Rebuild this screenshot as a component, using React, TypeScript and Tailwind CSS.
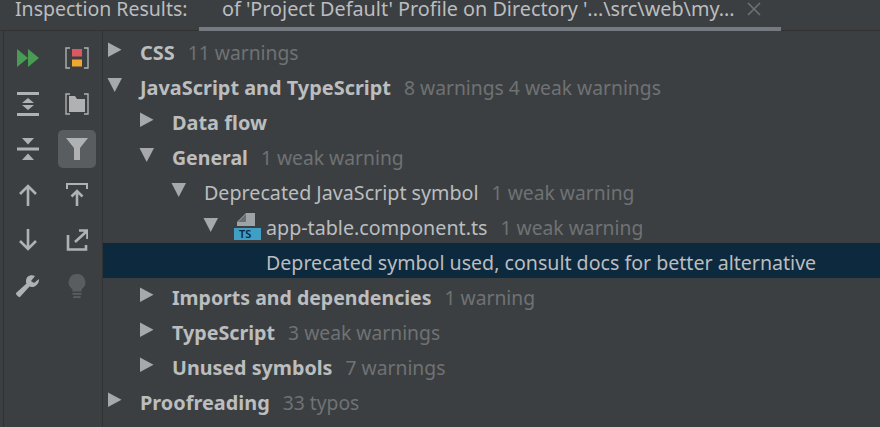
const font = { fontFamily: '"Noto Sans", sans-serif' };

function Tri({ open }: { open: boolean }) {
  return (
    <svg width="16" height="16" viewBox="0 0 16 16" className="shrink-0 mb-[2px]">
      {open ? <polygon points="0.500,1 15,1 7.700,15" fill="#a6a8aa" /> : <polygon points="1,0.500 14.500,7.700 1,15" fill="#a6a8aa" />}
    </svg>
  );
}

type RowProps = { pad: string; open?: boolean; noArrow?: boolean; bold?: string; label: string; count?: string; selected?: boolean; icon?: boolean };

function Row({ pad, open, noArrow, bold, label, count, selected, icon }: RowProps) {
  return (
    <div className={`h-[35px] flex items-center whitespace-nowrap ${pad} ${selected ? "bg-[#0d293e]" : ""}`}>
      {!noArrow && <Tri open={!!open} />}
      {icon && (
        <svg width="27" height="27" viewBox="0 0 27 27" className="ml-[15px] mr-[5px] mt-[2px] shrink-0">
          <path d="M12 0h9v13H3V9z" fill="#9ea3a8" />
          <path d="M12 1v8H4z" fill="#6b6e70" />
          <rect x="0" y="15" width="27" height="12" fill="#3f9fc4" />
          <text x="5" y="25" fontSize="11" fontWeight="600" fontFamily="Noto Sans" fill="#0d293e">TS</text>
        </svg>
      )}
      <span className={`mt-[5px] ${noArrow || icon ? "" : "ml-[17px]"} text-[#bbbdbf] ${bold ?? ""}`}>{label}</span>
      {count && <span className="mt-[5px] ml-[13px] text-[#6f7274] text-[19.300px]">{count}</span>}
    </div>
  );
}

const Btn = ({ children, active }: { children: React.ReactNode; active?: boolean }) => (
  <div className={`w-[38px] h-[38px] flex items-center justify-center rounded-[5px] ${active ? "bg-[#5a5d5f]" : ""}`}>{children}</div>
);

const c = "#afb1b3";
const boldA = "font-bold text-[19.900px]";
const boldB = "font-bold text-[19.500px]";
const boldC = "font-bold text-[19.700px]";

export default function App() {
  return (
    <div className="w-[880px] h-[427px] bg-[#3c3f41] overflow-hidden flex flex-col text-[19.700px] leading-none" style={font}>
      <div className="h-[31px] shrink-0 flex border-b border-[#323232] pl-[15px] text-[#bbbdbf]">
        <span className="leading-[18px] w-[184px] whitespace-nowrap text-[19.500px]">Inspection Results:</span>
        <div className="w-[582px] h-[31px] border-b-[4px] border-[#747a80] flex pl-[23px] shrink-0">
          <span className="leading-[18px] whitespace-nowrap text-[19.800px]">of 'Project Default' Profile on Directory '...\src\web\my...</span>
          <svg width="16" height="16" viewBox="0 0 16 16" className="ml-[11px] mt-[1px] shrink-0" stroke="#6e7173" strokeWidth="1.6"><path d="M2 2l12 12M14 2L2 14" /></svg>
        </div>
      </div>
      <div className="flex-1 flex">
        <div className="w-[100px] shrink-0 border-l border-r border-[#323232] ml-[3px] pl-[5px] pt-[8px] grid grid-cols-[38px_38px] auto-rows-[45.500px] gap-x-[11px] content-start">
          <Btn><svg width="24" height="18" viewBox="0 0 24 18"><path d="M1 0l11 9-11 9zM12 0l11 9-11 9z" fill="#499c54" /></svg></Btn>
          <Btn><svg width="24" height="22" viewBox="0 0 24 22" fill="none"><path d="M5 1H1v20h4M19 1h4v20h-4" stroke={c} strokeWidth="1.4" /><rect x="7" y="2" width="10" height="7.500" fill="#db5860" /><rect x="7" y="12.500" width="10" height="7" fill="#f0a732" /></svg></Btn>
          <Btn><svg width="22" height="24" viewBox="0 0 22 24" fill={c}><rect y="0" width="22" height="3" /><rect y="21" width="22" height="3" /><path d="M11 6l6 5H5zM11 18l-6-5h12z" /></svg></Btn>
          <Btn><svg width="24" height="22" viewBox="0 0 24 22" fill="none"><path d="M5 1H1v20h4M19 1h4v20h-4" stroke={c} strokeWidth="1.4" /><path d="M4 3h6l2 3h8v13H4z" fill={c} /></svg></Btn>
          <Btn><svg width="22" height="22" viewBox="0 0 22 22" fill={c}><rect y="9.500" width="22" height="3" /><path d="M5 0h12l-6 6.500zM5 22h12l-6-6.500z" /></svg></Btn>
          <Btn active><svg width="24" height="22" viewBox="0 0 24 22" fill={c}><path d="M1 0h22l-8 10v12H9V10z" /></svg></Btn>
          <Btn><svg width="20" height="22" viewBox="0 0 20 22" fill="none" stroke={c} strokeWidth="2.6"><path d="M10 22V2M2 10l8-8 8 8" /></svg></Btn>
          <Btn><svg width="22" height="23" viewBox="0 0 22 23" fill="none" stroke={c}><path d="M1 6V1h20v5" strokeWidth="2" /><path d="M11 23V8M5.500 13.500L11 8l5.500 5.500" strokeWidth="2.6" /></svg></Btn>
          <Btn><svg width="20" height="22" viewBox="0 0 20 22" fill="none" stroke={c} strokeWidth="2.6"><path d="M10 0v20M2 12l8 8 8-8" /></svg></Btn>
          <Btn><svg width="22" height="22" viewBox="0 0 22 22" fill="none" stroke={c} strokeWidth="2.6"><path d="M2 6v14.500h18V16M9 13L21 2M13 1.500h8.500V10" /></svg></Btn>
          <Btn><svg width="24" height="24" viewBox="0 0 24 24" fill={c}><path d="M23 5l-5 4-3-2 4-5c-4-2-9 0-9 5 0 1 0 2 .5 2.500L0 19c-1 1 3 5 4 4l9.500-10.500c5 2 10-3 9.500-7.500z" /></svg></Btn>
          <Btn><svg width="18" height="24" viewBox="0 0 18 26" fill="#5a5d5f"><path d="M9 0a9 9 0 0 1 5 16.500V19H4v-2.500A9 9 0 0 1 9 0z" /><rect x="4" y="20.500" width="10" height="2" /><rect x="5" y="24" width="8" height="2" /></svg></Btn>
        </div>
        <div className="flex-1 pt-[2px] min-w-0">
          <Row pad="pl-[4px]" bold={boldA} label="CSS" count="11 warnings" />
          <Row pad="pl-[4px]" open bold={boldA} label="JavaScript and TypeScript" count="8 warnings 4 weak warnings" />
          <Row pad="pl-[36px]" bold={boldA} label="Data flow" />
          <Row pad="pl-[36px]" open bold={boldB} label="General" count="1 weak warning" />
          <Row pad="pl-[68px]" open label="Deprecated JavaScript symbol" count="1 weak warning" />
          <Row pad="pl-[100px]" open icon label="app-table.component.ts" count="1 weak warning" />
          <Row pad="pl-[163px]" noArrow selected bold="text-[19.600px]" label="Deprecated symbol used, consult docs for better alternative" />
          <Row pad="pl-[36px]" bold={boldB} label="Imports and dependencies" count="1 warning" />
          <Row pad="pl-[36px]" bold={boldC} label="TypeScript" count="3 weak warnings" />
          <Row pad="pl-[36px]" bold={boldC} label="Unused symbols" count="7 warnings" />
          <Row pad="pl-[4px]" bold={boldA} label="Proofreading" count="33 typos" />
        </div>
      </div>
    </div>
  );
}
